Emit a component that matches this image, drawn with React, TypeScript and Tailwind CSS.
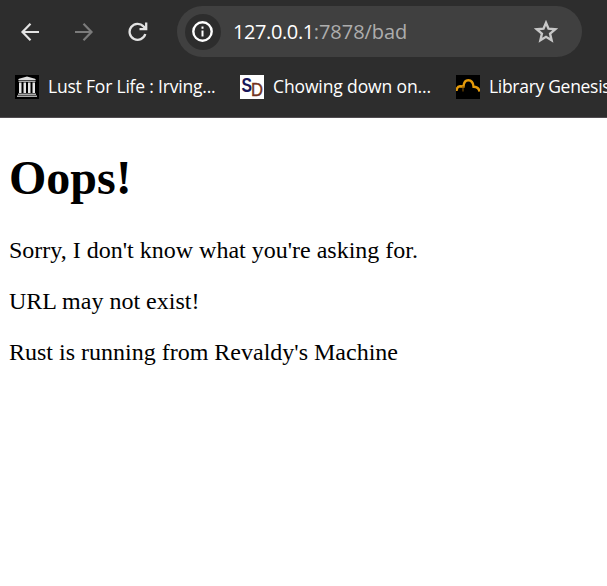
import type { ReactNode } from 'react';

function BackIcon() {
  return (
    <svg width="20" height="20" viewBox="0 0 20 20" fill="none" stroke="#e3e3e3" strokeWidth="2.2">
      <path d="M19 10H3M10.5 1.7L2.5 10L10.5 18.3" />
    </svg>
  );
}

function ForwardIcon() {
  return (
    <svg width="20" height="20" viewBox="0 0 20 20" fill="none" stroke="#7b7b7b" strokeWidth="2.2">
      <path d="M1 10H17M9.5 1.7L17.5 10L9.5 18.3" />
    </svg>
  );
}

function ReloadIcon() {
  return (
    <svg width="20" height="20" viewBox="0 0 20 20" fill="none" stroke="#e3e3e3" strokeWidth="2.3">
      <path d="M17.3 12A8 8 0 1 1 15.5 4.4L18 7" />
      <path d="M18.2 .5V7.2H11.5" />
    </svg>
  );
}

function InfoIcon() {
  return (
    <svg width="22" height="22" viewBox="0 0 22 22" fill="none" stroke="#fff" strokeWidth="2.4">
      <circle cx="10.5" cy="10.5" r="9.2" />
      <path d="M10.5 9.5V15.5M10.5 5.5V7.7" strokeWidth="2" />
    </svg>
  );
}

function StarIcon() {
  return (
    <svg width="24" height="24" viewBox="0 0 24 24" fill="none" stroke="#c7c7c7" strokeWidth="2.4">
      <path d="M12 2.8L14.5 8.7L21.2 9.3L16.1 13.7L17.6 20.2L12 16.8L6.4 20.2L7.9 13.7L2.8 9.3L9.5 8.7Z" />
    </svg>
  );
}

function ArchiveIcon() {
  return (
    <svg width="24" height="24" viewBox="0 0 24 24">
      <rect width="24" height="24" fill="#000" />
      <path d="M3 5L4 3.7L12 1.5L20 3.7L21 5Z" fill="#ddd" />
      <path d="M3.5 5.6H20.5V7H3.5Z" fill="#aaa" />
      <path d="M4 7.5H6.5V18H4ZM8.5 7.5H11V18H8.5ZM13 7.5H15.5V18H13ZM17.5 7.5H20V18H17.5Z" fill="#e4e4e4" />
      <path d="M3 18.5H21V20H3ZM2 20.5H22V22H2Z" fill="#aaa" />
    </svg>
  );
}

function DirectIcon() {
  return (
    <svg width="24" height="24" viewBox="0 0 24 24" className="font-['Liberation_Sans',sans-serif]">
      <rect width="24" height="24" fill="#fff" />
      <text x="1.5" y="16.5" fontSize="20" fontWeight="700" fill="#17165a" textLength="10.5" lengthAdjust="spacingAndGlyphs">S</text>
      <text x="11" y="21" fontSize="19" fill="#713321" stroke="#713321" strokeWidth="0.4" textLength="12" lengthAdjust="spacingAndGlyphs">D</text>
    </svg>
  );
}

function GenesisIcon() {
  return (
    <svg width="24" height="24" viewBox="0 0 24 24" fill="none">
      <rect width="24" height="24" fill="#000" />
      <path d="M.5 16Q.8 11.5 4 11.2L7.5 11.4Q8 5.2 12.3 5.2Q17 5.2 17.6 11.8Q22.8 12 23.5 16.5" stroke="#e59a0a" strokeWidth="2.4" />
      <path d="M7 11V16.5" stroke="#8d5903" strokeWidth="1" />
    </svg>
  );
}

function Bookmark({ icon, className, children }: { icon: ReactNode; className: string; children: string }) {
  return (
    <div className="flex shrink-0 items-center gap-[9px]">
      {icon}
      <span className={`mb-0.5 whitespace-nowrap text-[17.5px] leading-6 ${className}`}>{children}</span>
    </div>
  );
}

export default function App() {
  return (
    <div className="flex h-[586px] w-[607px] flex-col overflow-hidden bg-white">
      <header className="h-[118px] shrink-0 border-b border-[#504c50] bg-[#2d2d2d] font-['Open_Sans','Noto_Sans',sans-serif] text-white">
        <div className="flex h-[63px] items-center pl-5">
          <BackIcon />
          <span className="ml-[34px]"><ForwardIcon /></span>
          <span className="ml-[34px]"><ReloadIcon /></span>
          <div className="ml-[29px] flex h-[51px] w-[405px] items-center rounded-full bg-[#404040] pl-2 pr-6">
            <span className="flex size-9 items-center justify-center rounded-full bg-[#2d2d2d]"><InfoIcon /></span>
            <span className="ml-3 whitespace-nowrap text-[20px] leading-6 tracking-[-0.4px]">
              127.0.0.1<span className="tracking-[-0.05px] text-[#adadad]">:7878/bad</span>
            </span>
            <span className="ml-auto"><StarIcon /></span>
          </div>
        </div>
        <div className="flex h-12 items-center gap-[25px] pl-[15px]">
          <Bookmark icon={<ArchiveIcon />} className="w-[167px] tracking-[-0.2px]">Lust For Life : Irving...</Bookmark>
          <Bookmark icon={<DirectIcon />} className="w-[158px] tracking-[-0.12px]">Chowing down on...</Bookmark>
          <Bookmark icon={<GenesisIcon />} className="tracking-[-0.3px]">Library Genesis</Bookmark>
        </div>
      </header>
      <main className="flex flex-col gap-6 px-[9px] pt-8 font-['Liberation_Serif',serif] text-2xl leading-[27px] text-black">
        <h1 className="mb-[7px] text-[48px] font-bold leading-[56px]">Oops!</h1>
        <p>Sorry, I don't know what you're asking for.</p>
        <p>URL may not exist!</p>
        <p>Rust is running from Revaldy's Machine</p>
      </main>
    </div>
  );
}
